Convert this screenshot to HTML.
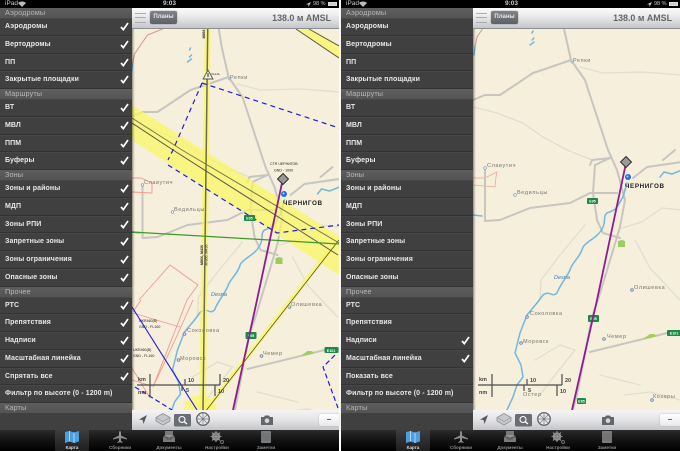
<!DOCTYPE html>
<html><head><meta charset="utf-8">
<style>
html,body{margin:0;padding:0;background:#fff;width:680px;height:451px;overflow:hidden}
*{box-sizing:border-box;font-family:"Liberation Sans","DejaVu Sans",sans-serif}
#all{position:absolute;left:0;top:0;width:680px;height:451px;filter:blur(.35px)}
svg.maps{position:absolute;left:0;top:0}
svg text{font-family:"Liberation Sans",sans-serif}
.side{position:absolute;top:8px;width:132px;height:422px;background:#404040;box-shadow:1px 0 2px rgba(0,0,0,.5)}
.h{height:10px;line-height:10px;font-size:7.3px;color:#b8b8b8;background:linear-gradient(#5e5e5e,#545454);padding-left:5px;letter-spacing:.1px;white-space:nowrap}
.r{height:17.75px;line-height:16.5px;font-size:7px;font-weight:bold;color:#e8e8e8;padding-left:5px;border-bottom:1px solid #333;border-top:1px solid #474747;position:relative;white-space:nowrap;letter-spacing:.1px}
.r svg{position:absolute;left:120px;top:3px}
.bar{position:absolute;top:8px;width:207px;height:21px;background:linear-gradient(#fafafa,#eeeeef 35%,#c6c7cb);border-bottom:1px solid #8d8f92}
.burger{position:absolute;left:3px;top:5px;width:11px;height:10px;border-top:1px solid #a9abae;border-bottom:1px solid #a9abae}
.burger:after{content:"";position:absolute;left:0;right:0;top:3px;height:1px;background:#a9abae}
.plan{position:absolute;left:18px;top:3px;width:27px;height:13px;border-radius:2px;background:linear-gradient(#80848a,#5d6166);color:#e8e8e8;font-size:6px;font-weight:bold;line-height:13px;text-align:center;box-shadow:0 0 1px #555}
.amsl{position:absolute;right:8px;top:5px;font-size:8.9px;font-weight:bold;color:#62666b;white-space:nowrap}
.tool{position:absolute;top:410px;width:207px;height:20px;background:linear-gradient(#f4f4f5,#e4e4e6 50%,#c3c4c8)}
.minus{position:absolute;left:187px;top:4px;width:20px;height:12px;background:linear-gradient(#fff,#e9e9e9);border-radius:2px 0 0 2px;box-shadow:0 0 1px #888;color:#555;font-weight:bold;font-size:8px;text-align:center;line-height:11px}
.st{position:absolute;top:0;height:8px;width:339px;background:#000;color:#c9c9c9;font-size:6.5px;line-height:8px}
.st span{position:absolute;top:0;white-space:nowrap}
.tabs{position:absolute;top:430px;width:339px;height:21px;background:linear-gradient(#2b2b2b,#141414 45%,#000)}
.sel{position:absolute;left:55px;top:0;width:34px;height:21px;background:linear-gradient(#3d3d3d,#1f1f1f);border-radius:1px}
.lb{position:absolute;top:14px;width:40px;text-align:center;font-size:4.5px;color:#8f8f8f;font-weight:bold;line-height:7px}
.tabs svg{position:absolute;top:1px}
</style></head><body><div id="all">

<svg class="maps" width="680" height="451" viewBox="0 0 680 451" xmlns="http://www.w3.org/2000/svg">
<defs>
<clipPath id="c1"><rect x="132" y="8" width="207" height="402"/></clipPath>
<clipPath id="c2"><rect x="473" y="8" width="207" height="402"/></clipPath>
<g id="roads" fill="none" stroke-linejoin="round" stroke-linecap="round">
  <g stroke="#e2ddcd" stroke-width="1.3">
    <path d="M580 67L603 73L643 72L682 75"/>
    <path d="M473 107L497 113L523 123L543 137L567 150L592 160"/>
    <path d="M622 228L642 222L662 208L682 210"/>
    <path d="M540 300L541 280L560 255L585 225"/>
    <path d="M635 240L650 268L680 300"/>
    <path d="M535 360L560 345L575 350"/>
    <path d="M625 395L650 392L680 400"/>
    <path d="M600 375L640 385"/>
    <path d="M540 395L555 375L575 350"/>
  </g>
  <g stroke="#c6c5c0" stroke-width="2">
    <path d="M561 10L564 29L571 60L585 80L608 150L617 170L625 200L620 227L598 300L592 317L578 390L573 410"/>
    <path d="M571 60L548 68L533 73L500 95L485 95L473 100"/>
    <path d="M485 170L485 221L500 220L530 208L570 203L590 193L617 193"/>
    <path d="M590 165L592 160L610 158L595 165L593 193L597 220L603 233L620 238"/>
    <path d="M633 178L647 167L682 162"/>
    <path d="M663 160L675 150"/>
    <path d="M590 352L643 339L667 333L682 332"/>
  </g>
  <path d="M505 12L490 18L477 37L475 47" stroke="#d49a92" stroke-width="1.1"/>
  <path d="M475 47L474 55" stroke="#6fb6e0" stroke-width="1.4"/>
  <g stroke="#73b7df" stroke-width="1.5">
    <path d="M543 295C550 290 552 298 557 293C560 285 565 280 570 270C572 262 580 258 583 247C588 240 598 238 603 227C606 220 603 216 607 213C612 211 615 210 617 207L623 197L627 183"/>
    <path d="M537 303L527 315L520 333L515 353L521 365L523 377L517 385L513 397L507 410"/>
    <path d="M543 295L537 303"/>
    <path d="M660 177L664 172L672 174L682 170"/>
    <path d="M473 215L482 216"/>
    <path d="M532 33L533 31M532 40L534 38M530 45L534 42"/>
  </g>
  <path d="M618 247L618 241L622 240L625 241L625 247Z" fill="#9ccc60" stroke="none"/>
  <path d="M643 339L650 334L654 334L657 336L650 338Z" fill="#a3cf56" stroke="none"/>
  <g stroke="none">
    <rect x="587" y="198" width="11" height="6" rx="1" fill="#1f8a45"/>
    <rect x="588" y="315" width="11" height="7" rx="1" fill="#1f8a45"/>
    <rect x="667" y="330" width="14" height="6" rx="1" fill="#1f8a45"/>
    <rect x="577" y="398" width="9" height="6" rx="1" fill="#1f8a45"/>
    <circle cx="515" cy="195" r="1.3" fill="#fff" stroke="#6a8caf" stroke-width=".6"/>
    <circle cx="485" cy="168" r="1.3" fill="#fff" stroke="#6a8caf" stroke-width=".6"/>
    <circle cx="572" cy="62" r="1.5" fill="#a7c3dc"/>
    <circle cx="527" cy="317" r="1.3" fill="#fff" stroke="#6a8caf"/>
    <circle cx="521" cy="343" r="1.3" fill="#fff" stroke="#6a8caf"/>
    <circle cx="604" cy="339" r="1.3" fill="#fff" stroke="#6a8caf"/>
    <circle cx="632" cy="290" r="1.3" fill="#fff" stroke="#6a8caf"/>
    <circle cx="652" cy="400" r="1.3" fill="#fff" stroke="#6a8caf"/>
  </g>
</g>
</defs>

<rect x="132" y="8" width="207" height="422" fill="#f6efdc"/>
<rect x="473" y="8" width="207" height="422" fill="#f6efdc"/>

<!-- MAP 2 -->
<g clip-path="url(#c2)">
  <path d="M473 178L485 178L497 172L496 177L495 187L474 185" fill="none" stroke="#e8a79a" stroke-width=".8"/>
  <use href="#roads"/>
  <g font-size="5.5" fill="#77756e" letter-spacing=".6">
    <text x="573" y="62">Репки</text>
    <text x="487" y="167">Славутич</text>
    <text x="517" y="194">Ведильцы</text>
    <text x="530" y="315">Соколовка</text>
    <text x="523" y="343">Моровск</text>
    <text x="523" y="396">Остер</text>
    <text x="607" y="338">Чемер</text>
    <text x="634" y="289">Олишевка</text>
    <text x="653" y="398">Козары</text>
  </g>
  <text x="554" y="279" font-size="5.5" fill="#3d7eb5" font-style="italic">Desna</text>
  <g font-size="3.6" fill="#fff" font-weight="bold" text-anchor="middle">
    <text x="592.5" y="202.5">E95</text><text x="593.5" y="320">E95</text><text x="674" y="334.5">E101</text><text x="581.5" y="402.5">E95</text>
  </g>
  <text x="625" y="188" font-size="6.3" font-weight="bold" fill="#222" letter-spacing=".6">ЧЕРНИГОВ</text>
  <path d="M626 163L597 300L572 410" fill="none" stroke="#8e1b91" stroke-width="1.8"/>
  <path d="M626 156.5L631.5 162L626 167.5L620.5 162Z" fill="#999" stroke="#222" stroke-width=".9"/>
  <circle cx="628" cy="177" r="3" fill="#1d6fe0"/><circle cx="627.5" cy="176.5" r="1" fill="#bcdcff"/>
  <g stroke="#4c4c4c" stroke-width="1.2" fill="none">
    <path d="M478 385H562M492 374V397M527 379V385M562 374V385M524 385V391M557 385V396"/>
  </g>
  <g font-size="5.5" font-weight="bold" fill="#444">
    <text x="479" y="381">km</text><text x="479" y="394">nm</text><text x="530" y="382">10</text><text x="565" y="382">20</text><text x="528" y="392">5</text><text x="560" y="393">10</text>
  </g>
</g>

<!-- MAP 1 -->
<g clip-path="url(#c1)">
  <g transform="translate(-342.5 17)"><use href="#roads"/></g>

  <!-- pink zones -->
  <g fill="none" stroke="#f09a8e" stroke-width=".9">
    <path d="M132 178H141L152 183V193L132 192"/>
    <path d="M139 300L170 265L198 285L187 300L153 387"/>
    <path d="M133 313L180 327"/>
    <path d="M141 300L133 312"/>
    <path d="M193 300L175 340L153 387"/>
    <path d="M132 368L150 398"/>
    <path d="M132 380L152 386"/>
  </g>

  <!-- yellow airways -->
  <g fill="#faf661" fill-opacity=".72">
    <path d="M132 105L339 236V275L132 140Z"/>
    <path d="M297 29H311L339 45V58Z"/>
    <path d="M205 8H211L206 410H199Z"/>
    <path d="M336 238L339 242L209 410H203Z"/>
    <circle cx="200" cy="412" r="17"/>
  </g>
  <g fill="none">
    <path d="M208 8L203 410" stroke="#6d6b55" stroke-width="1.5"/>
    <path d="M132 123L173 150L338 255" stroke="#55544a" stroke-width="1"/>
    <path d="M132 118L182 150L339 243" stroke="#7c7a45" stroke-width="1"/>
    <path d="M296 29L339 58" stroke="#55544a" stroke-width="1"/>
    <path d="M309 29L339 46" stroke="#55544a" stroke-width="1"/>
    <path d="M339 240L205 412" stroke="#4e4d40" stroke-width=".8"/>
  </g>

  <g font-size="5.5" fill="#77756e" letter-spacing=".6">
    <text x="230" y="79">Репки</text>
    <text x="144" y="184">Славутич</text>
    <text x="174" y="211">Ведильцы</text>
    <text x="187" y="332">Соколовка</text>
    <text x="180" y="360">Моровск</text>
    <text x="263" y="355">Чемер</text>
    <text x="291" y="306">Олишевка</text>
  </g>
  <text x="211" y="296" font-size="5.5" fill="#3d7eb5" font-style="italic">Desna</text>
  <text x="283" y="205" font-size="6.3" font-weight="bold" fill="#222" letter-spacing=".6">ЧЕРНИГОВ</text>
  <g font-size="3.6" fill="#fff" font-weight="bold" text-anchor="middle">
    <text x="251" y="337">E95</text><text x="331" y="352">E101</text>
  </g>

  <path d="M132 232L339 244" stroke="#3f9a28" stroke-width="1.2" fill="none"/>
  <path d="M282 183L257 300L233 410" fill="none" stroke="#8e1b91" stroke-width="1.8"/>

  <!-- blue -->
  <g fill="none" stroke="#1c1ce6">
    <path d="M132 307L197 410" stroke-width="1.1"/>
    <path d="M202 83L173 150L168 160M168 165L277 233L339 225M202 83L339 128" stroke-width="1.2" stroke-dasharray="5 4"/>
    <path d="M135 387L172 410M335 355L323 367L338 408" stroke-width="1.2" stroke-dasharray="5 3"/>
  </g>

  <!-- triangle -->
  <path d="M208 70L213 79H203Z" fill="#f3efd0" stroke="#555" stroke-width=".9"/>
  <rect x="207.5" y="73" width="1" height="4" fill="#333"/>
  <text x="211" y="75" font-size="3" fill="#333">VALAL</text>
  <g font-size="3.6" fill="#222">
    <text x="270" y="165">CTR ЧЕРНИГОВ</text>
    <text x="274" y="171.5">GND - 1000</text>
    <text x="139" y="322">UKR460(B)</text>
    <text x="139" y="328">GND - FL160</text>
    <text x="133" y="351">UKR460(B)</text>
    <text x="133" y="357">GND - FL160</text>
  </g>
  <g font-size="3.6" font-weight="bold" fill="#222" text-anchor="middle">
    <text transform="translate(203 255) rotate(-90)">M866, M436</text>
    <text transform="translate(207.5 255) rotate(-90)" font-weight="normal">M 866, M436</text>
    <text transform="translate(205 34) rotate(-90)">M866</text>
  </g>

  <path d="M283 173.5L288.5 179L283 184.5L277.5 179Z" fill="#999" stroke="#222" stroke-width=".9"/>
  <circle cx="284" cy="194" r="3" fill="#1d6fe0"/><circle cx="283.5" cy="193.5" r="1" fill="#bcdcff"/>
  <rect x="244" y="215" width="11" height="6" rx="1" fill="#1f8a45"/>
  <text x="249.5" y="219.5" font-size="3.6" font-weight="bold" fill="#fff" text-anchor="middle">E95</text>

  <g stroke="#4c4c4c" stroke-width="1.2" fill="none">
    <path d="M137 385H220M150 374V397M185 379V385M220 374V385M182 385V391M215 385V396"/>
  </g>
  <g font-size="5.5" font-weight="bold" fill="#444">
    <text x="138" y="381">km</text><text x="138" y="394">nm</text><text x="188" y="382">10</text><text x="223" y="382">20</text><text x="186" y="392">5</text><text x="218" y="393">10</text>
  </g>
</g>
</svg>

<!-- PANEL 1 -->
<div class="st" style="left:0">
  <span style="left:5px">iPad</span>
  <svg style="position:absolute;left:18px;top:1px" width="8" height="6" viewBox="0 0 8 6"><path d="M4 6L0 2C2 0 6 0 8 2Z" fill="#bbb"/></svg>
  <span style="left:163px;font-weight:bold">9:03</span>
  <svg style="position:absolute;left:306px;top:1.5px" width="5" height="5" viewBox="0 0 5 5"><path d="M5 0L0 2.4H2.4V5Z" fill="#ddd"/></svg>
  <span style="left:313px;font-size:5.5px">98 %</span>
  <span style="left:328px;top:2px;width:9px;height:4px;background:#ccc;border:.5px solid #ddd"></span>
</div>
<div class="side" style="left:0">
<div class="h">Аэродромы</div>
<div class="r">Аэродромы<svg width="9" height="9" viewBox="0 0 9 9"><path d="M1 5L3.3 7.6L8 1" fill="none" stroke="#fff" stroke-width="1.7"/></svg></div>
<div class="r">Вертодромы<svg width="9" height="9" viewBox="0 0 9 9"><path d="M1 5L3.3 7.6L8 1" fill="none" stroke="#fff" stroke-width="1.7"/></svg></div>
<div class="r">ПП<svg width="9" height="9" viewBox="0 0 9 9"><path d="M1 5L3.3 7.6L8 1" fill="none" stroke="#fff" stroke-width="1.7"/></svg></div>
<div class="r">Закрытые площадки<svg width="9" height="9" viewBox="0 0 9 9"><path d="M1 5L3.3 7.6L8 1" fill="none" stroke="#fff" stroke-width="1.7"/></svg></div>
<div class="h">Маршруты</div>
<div class="r">ВТ<svg width="9" height="9" viewBox="0 0 9 9"><path d="M1 5L3.3 7.6L8 1" fill="none" stroke="#fff" stroke-width="1.7"/></svg></div>
<div class="r">МВЛ<svg width="9" height="9" viewBox="0 0 9 9"><path d="M1 5L3.3 7.6L8 1" fill="none" stroke="#fff" stroke-width="1.7"/></svg></div>
<div class="r">ППМ<svg width="9" height="9" viewBox="0 0 9 9"><path d="M1 5L3.3 7.6L8 1" fill="none" stroke="#fff" stroke-width="1.7"/></svg></div>
<div class="r">Буферы<svg width="9" height="9" viewBox="0 0 9 9"><path d="M1 5L3.3 7.6L8 1" fill="none" stroke="#fff" stroke-width="1.7"/></svg></div>
<div class="h">Зоны</div>
<div class="r">Зоны и районы<svg width="9" height="9" viewBox="0 0 9 9"><path d="M1 5L3.3 7.6L8 1" fill="none" stroke="#fff" stroke-width="1.7"/></svg></div>
<div class="r">МДП<svg width="9" height="9" viewBox="0 0 9 9"><path d="M1 5L3.3 7.6L8 1" fill="none" stroke="#fff" stroke-width="1.7"/></svg></div>
<div class="r">Зоны РПИ<svg width="9" height="9" viewBox="0 0 9 9"><path d="M1 5L3.3 7.6L8 1" fill="none" stroke="#fff" stroke-width="1.7"/></svg></div>
<div class="r">Запретные зоны<svg width="9" height="9" viewBox="0 0 9 9"><path d="M1 5L3.3 7.6L8 1" fill="none" stroke="#fff" stroke-width="1.7"/></svg></div>
<div class="r">Зоны ограничения<svg width="9" height="9" viewBox="0 0 9 9"><path d="M1 5L3.3 7.6L8 1" fill="none" stroke="#fff" stroke-width="1.7"/></svg></div>
<div class="r">Опасные зоны<svg width="9" height="9" viewBox="0 0 9 9"><path d="M1 5L3.3 7.6L8 1" fill="none" stroke="#fff" stroke-width="1.7"/></svg></div>
<div class="h">Прочее</div>
<div class="r">РТС<svg width="9" height="9" viewBox="0 0 9 9"><path d="M1 5L3.3 7.6L8 1" fill="none" stroke="#fff" stroke-width="1.7"/></svg></div>
<div class="r">Препятствия<svg width="9" height="9" viewBox="0 0 9 9"><path d="M1 5L3.3 7.6L8 1" fill="none" stroke="#fff" stroke-width="1.7"/></svg></div>
<div class="r">Надписи<svg width="9" height="9" viewBox="0 0 9 9"><path d="M1 5L3.3 7.6L8 1" fill="none" stroke="#fff" stroke-width="1.7"/></svg></div>
<div class="r">Масштабная линейка<svg width="9" height="9" viewBox="0 0 9 9"><path d="M1 5L3.3 7.6L8 1" fill="none" stroke="#fff" stroke-width="1.7"/></svg></div>
<div class="r">Спрятать все<svg width="9" height="9" viewBox="0 0 9 9"><path d="M1 5L3.3 7.6L8 1" fill="none" stroke="#fff" stroke-width="1.7"/></svg></div>
<div class="r">Фильтр по высоте (0 - 1200 m)</div>
<div class="h">Карты</div>
</div>
<div class="bar" style="left:132px"><div class="burger"></div><div class="plan">Планы</div><div class="amsl">138.0 м AMSL</div></div>
<div class="tool" style="left:132px">
  <svg width="100" height="20" viewBox="0 0 100 20" style="position:absolute;left:0;top:0">
    <path d="M15 5L7 9.5L10.5 10L11.5 14Z" fill="#55585c"/>
    <path d="M31 3.5L38 7.5V11L31 15L24 11V7.5Z" fill="#c8c9cc" stroke="#8e9094" stroke-width=".8"/>
    <path d="M24 7.5L31 11.5L38 7.5" fill="none" stroke="#8e9094" stroke-width=".6"/>
    <rect x="42" y="4" width="17" height="12.5" rx="1.5" fill="#6a6e74"/>
    <circle cx="50" cy="9.5" r="3" fill="none" stroke="#fff" stroke-width="1.1"/>
    <path d="M52 11.5L55 14" stroke="#fff" stroke-width="1.4"/>
    <circle cx="71" cy="9" r="6.3" fill="#e8e8ea" stroke="#55585c" stroke-width="1.2"/>
    <path d="M71 2.7V15.3M64.7 9H77.3M66.5 4.5L75.5 13.5M75.5 4.5L66.5 13.5" stroke="#777a7e" stroke-width=".7"/>
  </svg>
  <svg width="12" height="10" viewBox="0 0 12 10" style="position:absolute;left:129px;top:5px"><path d="M0 2H3L4 .5H8L9 2H12V10H0Z" fill="#63676c"/><circle cx="6" cy="5.7" r="2.3" fill="#d8d8da"/></svg>
  <div class="minus">−</div>
</div>
<div class="tabs" style="left:0">
  <div class="sel"></div>
  <svg style="left:65px" width="14" height="12" viewBox="0 0 14 12"><path d="M0 1L4.5 0L9 1.5L14 0V10.5L9 12L4.5 10.5L0 12Z" fill="#4a9fe0"/><path d="M4.5 0V10.5M9 1.5V12" stroke="#d8ecfa" stroke-width=".7"/></svg>
  <svg style="left:113px" width="14" height="12" viewBox="0 0 14 12"><path d="M7 0C7.6 0 8 .8 8 2V4.5L14 7.5V8.5L8 7V10L9.5 11V12L7 11.2L4.5 12V11L6 10V7L0 8.5V7.5L6 4.5V2C6 .8 6.4 0 7 0Z" fill="#8d8f91"/></svg>
  <svg style="left:163px" width="12" height="12" viewBox="0 0 12 12"><path d="M2 0H10V4L12 6V11H0V6L2 4Z" fill="#77797b"/><path d="M2.5 5H9.5" stroke="#b5b5b5"/><path d="M0 6H4V8H8V6H12" fill="none" stroke="#444" stroke-width=".8"/></svg>
  <svg style="left:210px" width="14" height="13" viewBox="0 0 14 13"><circle cx="6" cy="5.5" r="3.2" fill="none" stroke="#8d8f91" stroke-width="2.2"/><path d="M6 0V11M.5 5.5H11.5M2 1.5L10 9.5M10 1.5L2 9.5" stroke="#8d8f91" stroke-width="1.1"/><circle cx="12" cy="11" r="1.5" fill="none" stroke="#6f7173"/></svg>
  <svg style="left:261px" width="10" height="12" viewBox="0 0 10 12"><rect width="10" height="12" rx="1" fill="#7a7c7e"/><path d="M0 3H10M0 5H10M0 7H10M0 9H10" stroke="#5a5c5e" stroke-width=".5"/></svg>
  <div class="lb" style="left:52px;color:#ddd">Карта</div>
  <div class="lb" style="left:100px">Сборники</div>
  <div class="lb" style="left:149px">Документы</div>
  <div class="lb" style="left:197px">Настройки</div>
  <div class="lb" style="left:246px">Заметки</div>
</div>

<!-- PANEL 2 -->
<div class="st" style="left:341px">
  <span style="left:5px">iPad</span>
  <svg style="position:absolute;left:18px;top:1px" width="8" height="6" viewBox="0 0 8 6"><path d="M4 6L0 2C2 0 6 0 8 2Z" fill="#bbb"/></svg>
  <span style="left:164px;font-weight:bold">9:03</span>
  <svg style="position:absolute;left:306px;top:1.5px" width="5" height="5" viewBox="0 0 5 5"><path d="M5 0L0 2.4H2.4V5Z" fill="#ddd"/></svg>
  <span style="left:313px;font-size:5.5px">98 %</span>
  <span style="left:328px;top:2px;width:9px;height:4px;background:#ccc;border:.5px solid #ddd"></span>
</div>
<div class="side" style="left:341px">
<div class="h">Аэродромы</div>
<div class="r">Аэродромы</div>
<div class="r">Вертодромы</div>
<div class="r">ПП</div>
<div class="r">Закрытые площадки</div>
<div class="h">Маршруты</div>
<div class="r">ВТ</div>
<div class="r">МВЛ</div>
<div class="r">ППМ</div>
<div class="r">Буферы</div>
<div class="h">Зоны</div>
<div class="r">Зоны и районы</div>
<div class="r">МДП</div>
<div class="r">Зоны РПИ</div>
<div class="r">Запретные зоны</div>
<div class="r">Зоны ограничения</div>
<div class="r">Опасные зоны</div>
<div class="h">Прочее</div>
<div class="r">РТС</div>
<div class="r">Препятствия</div>
<div class="r">Надписи<svg width="9" height="9" viewBox="0 0 9 9"><path d="M1 5L3.3 7.6L8 1" fill="none" stroke="#fff" stroke-width="1.7"/></svg></div>
<div class="r">Масштабная линейка<svg width="9" height="9" viewBox="0 0 9 9"><path d="M1 5L3.3 7.6L8 1" fill="none" stroke="#fff" stroke-width="1.7"/></svg></div>
<div class="r">Показать все</div>
<div class="r">Фильтр по высоте (0 - 1200 m)</div>
<div class="h">Карты</div>
</div>
<div class="bar" style="left:473px"><div class="burger"></div><div class="plan">Планы</div><div class="amsl">138.0 м AMSL</div></div>
<div class="tool" style="left:473px">
  <svg width="100" height="20" viewBox="0 0 100 20" style="position:absolute;left:0;top:0">
    <path d="M15 5L7 9.5L10.5 10L11.5 14Z" fill="#55585c"/>
    <path d="M31 3.5L38 7.5V11L31 15L24 11V7.5Z" fill="#c8c9cc" stroke="#8e9094" stroke-width=".8"/>
    <path d="M24 7.5L31 11.5L38 7.5" fill="none" stroke="#8e9094" stroke-width=".6"/>
    <rect x="42" y="4" width="17" height="12.5" rx="1.5" fill="#6a6e74"/>
    <circle cx="50" cy="9.5" r="3" fill="none" stroke="#fff" stroke-width="1.1"/>
    <path d="M52 11.5L55 14" stroke="#fff" stroke-width="1.4"/>
    <circle cx="71" cy="9" r="6.3" fill="#e8e8ea" stroke="#55585c" stroke-width="1.2"/>
    <path d="M71 2.7V15.3M64.7 9H77.3M66.5 4.5L75.5 13.5M75.5 4.5L66.5 13.5" stroke="#777a7e" stroke-width=".7"/>
  </svg>
  <svg width="12" height="10" viewBox="0 0 12 10" style="position:absolute;left:129px;top:5px"><path d="M0 2H3L4 .5H8L9 2H12V10H0Z" fill="#63676c"/><circle cx="6" cy="5.7" r="2.3" fill="#d8d8da"/></svg>
  <div class="minus">−</div>
</div>
<div class="tabs" style="left:341px">
  <div class="sel"></div>
  <svg style="left:65px" width="14" height="12" viewBox="0 0 14 12"><path d="M0 1L4.5 0L9 1.5L14 0V10.5L9 12L4.5 10.5L0 12Z" fill="#4a9fe0"/><path d="M4.5 0V10.5M9 1.5V12" stroke="#d8ecfa" stroke-width=".7"/></svg>
  <svg style="left:113px" width="14" height="12" viewBox="0 0 14 12"><path d="M7 0C7.6 0 8 .8 8 2V4.5L14 7.5V8.5L8 7V10L9.5 11V12L7 11.2L4.5 12V11L6 10V7L0 8.5V7.5L6 4.5V2C6 .8 6.4 0 7 0Z" fill="#8d8f91"/></svg>
  <svg style="left:163px" width="12" height="12" viewBox="0 0 12 12"><path d="M2 0H10V4L12 6V11H0V6L2 4Z" fill="#77797b"/><path d="M2.5 5H9.5" stroke="#b5b5b5"/><path d="M0 6H4V8H8V6H12" fill="none" stroke="#444" stroke-width=".8"/></svg>
  <svg style="left:210px" width="14" height="13" viewBox="0 0 14 13"><circle cx="6" cy="5.5" r="3.2" fill="none" stroke="#8d8f91" stroke-width="2.2"/><path d="M6 0V11M.5 5.5H11.5M2 1.5L10 9.5M10 1.5L2 9.5" stroke="#8d8f91" stroke-width="1.1"/><circle cx="12" cy="11" r="1.5" fill="none" stroke="#6f7173"/></svg>
  <svg style="left:261px" width="10" height="12" viewBox="0 0 10 12"><rect width="10" height="12" rx="1" fill="#7a7c7e"/><path d="M0 3H10M0 5H10M0 7H10M0 9H10" stroke="#5a5c5e" stroke-width=".5"/></svg>
  <div class="lb" style="left:52px;color:#ddd">Карта</div>
  <div class="lb" style="left:100px">Сборники</div>
  <div class="lb" style="left:149px">Документы</div>
  <div class="lb" style="left:197px">Настройки</div>
  <div class="lb" style="left:246px">Заметки</div>
</div>

</div></body></html>
